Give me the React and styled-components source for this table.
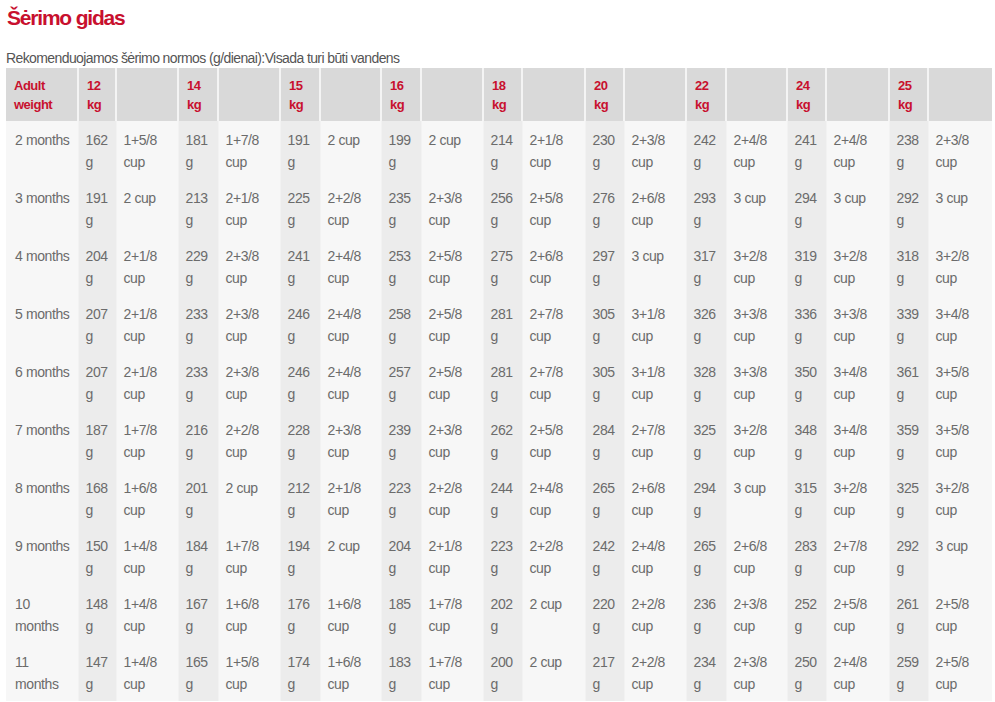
import React from "react";
import styled, { createGlobalStyle } from "styled-components";

const GlobalStyle = createGlobalStyle`
	body {
		margin: 0;
		background: #ffffff;
		font-family: "Liberation Sans Narrow", "Arial Narrow", "Liberation Sans", Arial, sans-serif;
	}
`;

const Page = styled.div`
	padding: 6px 3px 0 6px;
	width: 986px;
`;

const Title = styled.h1`
	margin: 0 0 0 1px;
	font-size: 21px;
	line-height: 24px;
	font-weight: bold;
	letter-spacing: -1.2px;
	color: #c8102e;
`;

const Subtitle = styled.p`
	margin: 18px 0 0 0;
	font-size: 14px;
	line-height: 20px;
	letter-spacing: -0.6px;
	color: #555555;
`;

const Table = styled.table`
	width: 986px;
	table-layout: fixed;
	border-collapse: collapse;
	border-spacing: 0;
`;

const HeadCell = styled.th`
	background: #d9d9d9;
	border-left: 2px solid #f4f4f4;
	padding: 8px 8px 7px 8px;
	height: 53px;
	box-sizing: border-box;
	text-align: left;
	vertical-align: top;
	font-size: 13px;
	line-height: 19px;
	font-weight: bold;
	letter-spacing: -0.5px;
	color: #c8102e;
	&:first-child {
		border-left: none;
	}
`;

const BodyCell = styled.td`
	background: ${(p) => (p.$dark ? "#ececec" : "#f7f7f7")};
	border-left: 1px solid #f2f2f2;
	padding: 8px 7px 6px 7px;
	height: 58px;
	box-sizing: border-box;
	vertical-align: top;
	font-size: 14px;
	line-height: 22px;
	letter-spacing: -0.4px;
	color: #6b6b6b;
	&:first-child {
		border-left: none;
		padding-left: 9px;
		padding-right: 4px;
	}
`;

const widths = [72, 38, 62, 40, 62, 40, 61, 40, 62, 39, 63, 39, 62, 40, 61, 39, 63, 39, 64];

const weights = [12, 14, 15, 16, 18, 20, 22, 24, 25];

const rows = [
	["2 months", [162, "1+5/8"], [181, "1+7/8"], [191, "2"], [199, "2"], [214, "2+1/8"], [230, "2+3/8"], [242, "2+4/8"], [241, "2+4/8"], [238, "2+3/8"]],
	["3 months", [191, "2"], [213, "2+1/8"], [225, "2+2/8"], [235, "2+3/8"], [256, "2+5/8"], [276, "2+6/8"], [293, "3"], [294, "3"], [292, "3"]],
	["4 months", [204, "2+1/8"], [229, "2+3/8"], [241, "2+4/8"], [253, "2+5/8"], [275, "2+6/8"], [297, "3"], [317, "3+2/8"], [319, "3+2/8"], [318, "3+2/8"]],
	["5 months", [207, "2+1/8"], [233, "2+3/8"], [246, "2+4/8"], [258, "2+5/8"], [281, "2+7/8"], [305, "3+1/8"], [326, "3+3/8"], [336, "3+3/8"], [339, "3+4/8"]],
	["6 months", [207, "2+1/8"], [233, "2+3/8"], [246, "2+4/8"], [257, "2+5/8"], [281, "2+7/8"], [305, "3+1/8"], [328, "3+3/8"], [350, "3+4/8"], [361, "3+5/8"]],
	["7 months", [187, "1+7/8"], [216, "2+2/8"], [228, "2+3/8"], [239, "2+3/8"], [262, "2+5/8"], [284, "2+7/8"], [325, "3+2/8"], [348, "3+4/8"], [359, "3+5/8"]],
	["8 months", [168, "1+6/8"], [201, "2"], [212, "2+1/8"], [223, "2+2/8"], [244, "2+4/8"], [265, "2+6/8"], [294, "3"], [315, "3+2/8"], [325, "3+2/8"]],
	["9 months", [150, "1+4/8"], [184, "1+7/8"], [194, "2"], [204, "2+1/8"], [223, "2+2/8"], [242, "2+4/8"], [265, "2+6/8"], [283, "2+7/8"], [292, "3"]],
	["10 months", [148, "1+4/8"], [167, "1+6/8"], [176, "1+6/8"], [185, "1+7/8"], [202, "2"], [220, "2+2/8"], [236, "2+3/8"], [252, "2+5/8"], [261, "2+5/8"]],
	["11 months", [147, "1+4/8"], [165, "1+5/8"], [174, "1+6/8"], [183, "1+7/8"], [200, "2"], [217, "2+2/8"], [234, "2+3/8"], [250, "2+4/8"], [259, "2+5/8"]],
];

export default function App() {
	return (
		<Page>
			<GlobalStyle />
			<Title>Šėrimo gidas</Title>
			<Subtitle>Rekomenduojamos šėrimo normos (g/dienai):Visada turi būti vandens</Subtitle>
			<Table>
				<colgroup>
					{widths.map((w, i) => (
						<col key={i} style={{ width: w }} />
					))}
				</colgroup>
				<thead>
					<tr>
						<HeadCell>Adult weight</HeadCell>
						{weights.map((w) => (
							<React.Fragment key={w}>
								<HeadCell>{w} kg</HeadCell>
								<HeadCell />
							</React.Fragment>
						))}
					</tr>
				</thead>
				<tbody>
					{rows.map(([age, ...cells]) => (
						<tr key={age}>
							<BodyCell>{age}</BodyCell>
							{cells.map(([g, cup], i) => (
								<React.Fragment key={i}>
									<BodyCell $dark>{g} g</BodyCell>
									<BodyCell>{cup} cup</BodyCell>
								</React.Fragment>
							))}
						</tr>
					))}
				</tbody>
			</Table>
		</Page>
	);
}
